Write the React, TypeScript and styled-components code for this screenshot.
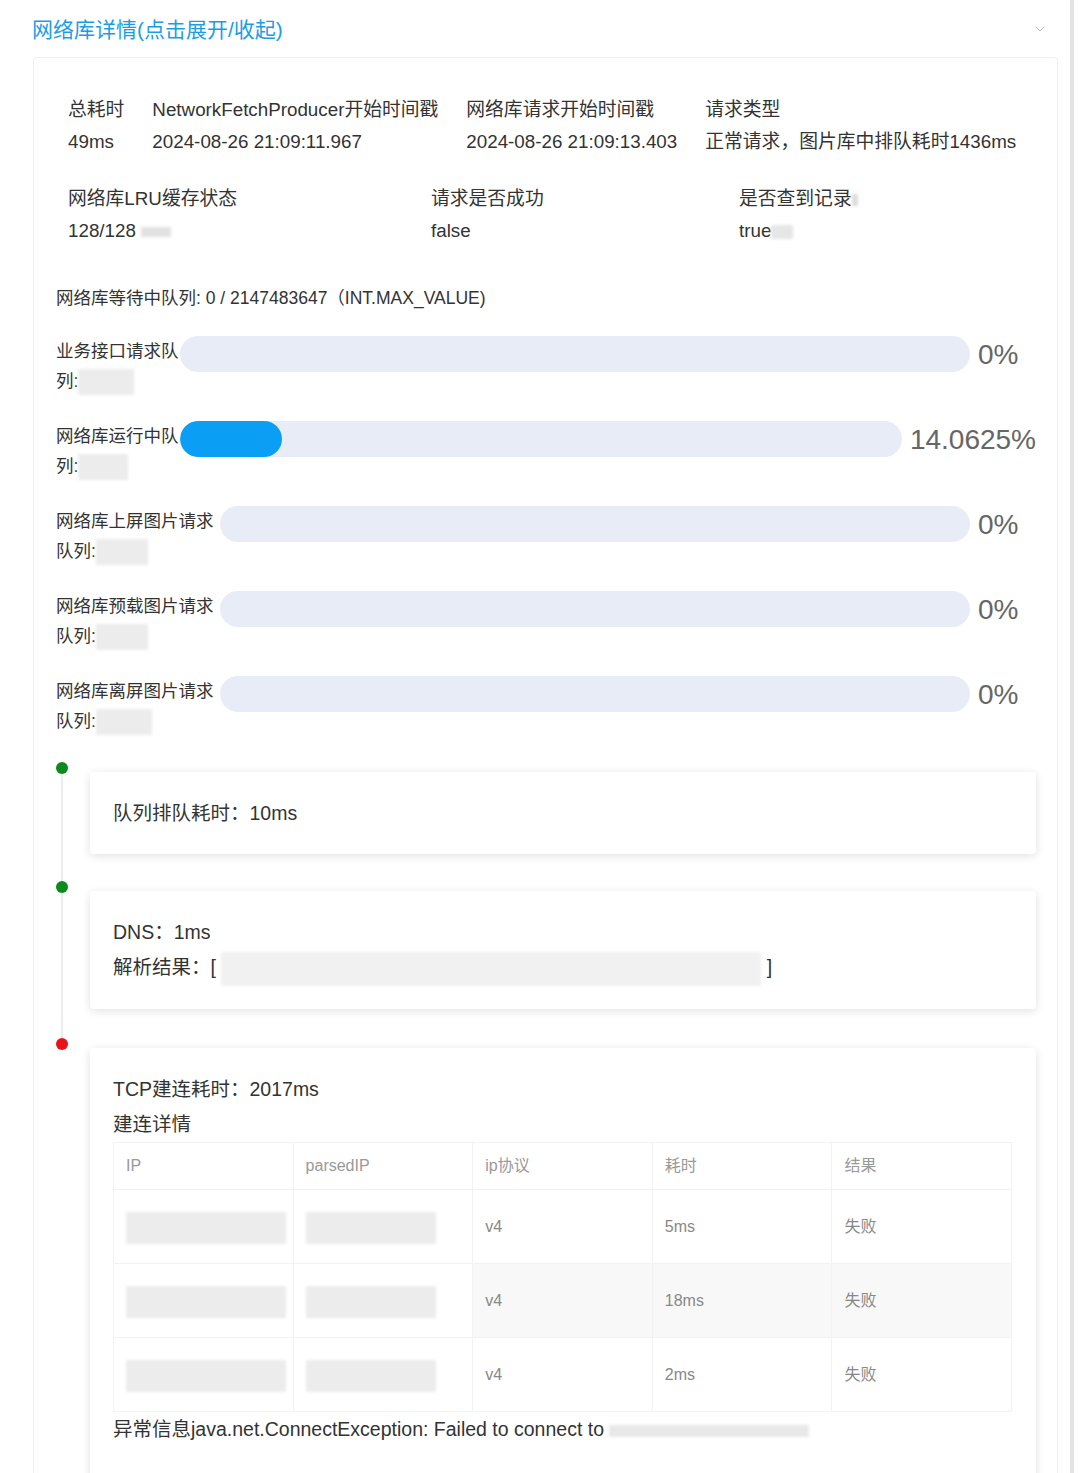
import { createGlobalStyle, styled } from "styled-components";
import { ChevronDown } from "lucide-react";

const GlobalStyle = createGlobalStyle`
  body {
    margin: 0;
    background: #fff;
    font-family: "Liberation Sans", "Noto Sans CJK SC", sans-serif;
    color: #333;
  }
`;

const Page = styled.div`
  width: 1074px;
  min-height: 1473px;
  border-right: 4px solid #e4e4e4;
  box-sizing: border-box;
  overflow: hidden;
`;

const Header = styled.div`
  height: 57px;
  display: flex;
  align-items: center;
  justify-content: space-between;
  padding: 0 22px 0 32px;
  box-sizing: border-box;
`;

const Title = styled.span`
  font-size: 21px;
  color: #1b9de6;
  margin-top: -1px;
`;

const Panel = styled.div`
  margin-left: 33px;
  width: 1025px;
  border: 1px solid #f0f0f0;
  border-bottom: none;
  border-radius: 4px 4px 0 0;
  padding: 36px 0 0 22px;
  box-sizing: border-box;
`;

const InfoRow = styled.div<{ $cols?: string }>`
  display: ${(p) => (p.$cols ? "grid" : "flex")};
  grid-template-columns: ${(p) => p.$cols || "none"};
  gap: 0 28px;
  padding-left: 12px;
  margin-bottom: 25px;
`;

const InfoCol = styled.div`
  display: flex;
  flex-direction: column;
  font-size: 18.8px;
  line-height: 32px;
  color: #333;
  white-space: nowrap;
`;

const Smudge = styled.span<{ $w: number; $h: number; $tone?: string }>`
  display: inline-block;
  vertical-align: middle;
  width: ${(p) => p.$w}px;
  height: ${(p) => p.$h}px;
  background: ${(p) => p.$tone || "#ececec"};
  filter: blur(1.5px);
`;

const WaitLine = styled.div`
  font-size: 17.5px;
  line-height: 30px;
  color: #333;
  margin: 36px 0 23px;
`;

const QueueRow = styled.div`
  display: flex;
  align-items: flex-start;
  width: 980px;
  margin-bottom: 25px;
`;

const QueueLabel = styled.div<{ $w: number }>`
  width: ${(p) => p.$w}px;
  flex-shrink: 0;
  font-size: 17.5px;
  line-height: 30px;
  color: #333;
`;

const Track = styled.div`
  flex: 1;
  height: 36px;
  border-radius: 18px;
  background: #e8ecf7;
  overflow: hidden;
`;

const Fill = styled.div`
  height: 100%;
  border-radius: 18px;
  background: #0a9ff5;
`;

const Percent = styled.span`
  min-width: 58px;
  margin-left: 8px;
  font-size: 28px;
  line-height: 38px;
  color: #666;
  font-weight: 300;
`;

const Timeline = styled.div`
  margin-top: 26px;
  width: 980px;
`;

const TimelineItem = styled.div`
  display: grid;
  grid-template-columns: 34px 1fr;
`;

const Rail = styled.div`
  display: flex;
  flex-direction: column;
`;

const Dot = styled.span<{ $color: string }>`
  width: 12px;
  height: 12px;
  border-radius: 50%;
  background: ${(p) => p.$color};
`;

const RailLine = styled.span<{ $hidden?: boolean }>`
  flex: 1;
  width: 2px;
  margin-left: 5px;
  background: ${(p) => (p.$hidden ? "transparent" : "#ececec")};
`;

const CardSlot = styled.div<{ $pad: number }>`
  padding: 10px 0 ${(p) => p.$pad}px;
`;

const Card = styled.div`
  background: #fff;
  border-radius: 4px;
  box-shadow: 0 2px 10px rgba(0, 0, 0, 0.12);
  padding: 24px 24px 23px 23px;
  font-size: 19.5px;
  line-height: 35px;
  color: #333;
`;

const Table = styled.table`
  width: 100%;
  border-collapse: collapse;
  table-layout: fixed;
  font-size: 16px;
  color: #888;
`;

const Th = styled.th`
  height: 46px;
  text-align: left;
  font-weight: normal;
  padding: 0 12px;
  border: 1px solid #f2f2f2;
  color: #999;
`;

const Td = styled.td<{ $shade?: boolean }>`
  height: 73px;
  padding: 0 12px;
  border: 1px solid #f2f2f2;
  background: ${(p) => (p.$shade ? "#f8f8f8" : "#fff")};
`;

const queues = [
  { label: "业务接口请求队", rest: "列:", w: 124, smudge: 56, pct: 0, text: "0%" },
  { label: "网络库运行中队", rest: "列:", w: 124, smudge: 50, pct: 14.0625, text: "14.0625%" },
  { label: "网络库上屏图片请求", rest: "队列:", w: 164, smudge: 52, pct: 0, text: "0%" },
  { label: "网络库预载图片请求", rest: "队列:", w: 164, smudge: 52, pct: 0, text: "0%" },
  { label: "网络库离屏图片请求", rest: "队列:", w: 164, smudge: 56, pct: 0, text: "0%" },
];

const tcpRows = [
  { time: "5ms", shade: false },
  { time: "18ms", shade: true },
  { time: "2ms", shade: false },
];

export default function App() {
  return (
    <Page>
      <GlobalStyle />
      <Header>
        <Title>网络库详情(点击展开/收起)</Title>
        <ChevronDown size={16} color="#bbb" strokeWidth={1.5} />
      </Header>
      <Panel>
        <InfoRow>
          <InfoCol>
            <span>总耗时</span>
            <span>49ms</span>
          </InfoCol>
          <InfoCol>
            <span>NetworkFetchProducer开始时间戳</span>
            <span>2024-08-26 21:09:11.967</span>
          </InfoCol>
          <InfoCol>
            <span>网络库请求开始时间戳</span>
            <span>2024-08-26 21:09:13.403</span>
          </InfoCol>
          <InfoCol>
            <span>请求类型</span>
            <span>正常请求，图片库中排队耗时1436ms</span>
          </InfoCol>
        </InfoRow>
        <InfoRow $cols="335px 280px auto">
          <InfoCol>
            <span>网络库LRU缓存状态</span>
            <span>
              128/128 <Smudge $w={30} $h={10} $tone="#e2e2e2" />
            </span>
          </InfoCol>
          <InfoCol>
            <span>请求是否成功</span>
            <span>false</span>
          </InfoCol>
          <InfoCol>
            <span>
              是否查到记录<Smudge $w={6} $h={12} $tone="#ddd" />
            </span>
            <span>
              true<Smudge $w={22} $h={14} $tone="#e6e6e6" />
            </span>
          </InfoCol>
        </InfoRow>
        <WaitLine>网络库等待中队列: 0 / 2147483647（INT.MAX_VALUE)</WaitLine>
        {queues.map((q) => (
          <QueueRow key={q.label}>
            <QueueLabel $w={q.w}>
              {q.label}
              <br />
              {q.rest}
              <Smudge $w={q.smudge} $h={26} />
            </QueueLabel>
            <Track>
              <Fill style={{ width: `${q.pct}%` }} />
            </Track>
            <Percent>{q.text}</Percent>
          </QueueRow>
        ))}
        <Timeline>
          <TimelineItem>
            <Rail>
              <Dot $color="#0b8a1e" />
              <RailLine />
            </Rail>
            <CardSlot $pad={27}>
              <Card>队列排队耗时：10ms</Card>
            </CardSlot>
          </TimelineItem>
          <TimelineItem>
            <Rail>
              <Dot $color="#0b8a1e" />
              <RailLine />
            </Rail>
            <CardSlot $pad={29}>
              <Card>
                <div>DNS：1ms</div>
                <div>
                  解析结果：[ <Smudge $w={540} $h={34} $tone="#f1f1f1" /> ]
                </div>
              </Card>
            </CardSlot>
          </TimelineItem>
          <TimelineItem>
            <Rail>
              <Dot $color="#e8141b" />
              <RailLine $hidden />
            </Rail>
            <CardSlot $pad={0}>
              <Card>
                <div>TCP建连耗时：2017ms</div>
                <div>建连详情</div>
                <Table>
                  <thead>
                    <tr>
                      <Th>IP</Th>
                      <Th>parsedIP</Th>
                      <Th>ip协议</Th>
                      <Th>耗时</Th>
                      <Th>结果</Th>
                    </tr>
                  </thead>
                  <tbody>
                    {tcpRows.map((r) => (
                      <tr key={r.time}>
                        <Td>
                          <Smudge $w={160} $h={32} />
                        </Td>
                        <Td>
                          <Smudge $w={130} $h={32} />
                        </Td>
                        <Td $shade={r.shade}>v4</Td>
                        <Td $shade={r.shade}>{r.time}</Td>
                        <Td $shade={r.shade}>失败</Td>
                      </tr>
                    ))}
                  </tbody>
                </Table>
                <div>
                  异常信息java.net.ConnectException: Failed to connect to{" "}
                  <Smudge $w={200} $h={12} $tone="#e8e8e8" />
                </div>
                <div style={{ height: 40 }} />
              </Card>
            </CardSlot>
          </TimelineItem>
        </Timeline>
      </Panel>
    </Page>
  );
}
